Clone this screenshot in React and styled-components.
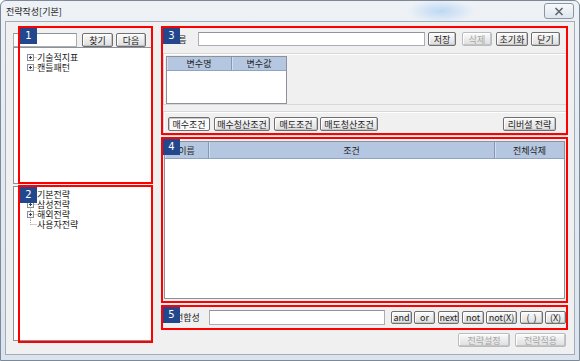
import React from 'react';
import styled, { createGlobalStyle } from 'styled-components';

const GlobalStyle = createGlobalStyle`
  html, body { margin: 0; padding: 0; }
  body {
    width: 580px;
    height: 361px;
    overflow: hidden;
    font-family: "Noto Sans CJK KR", "DejaVu Sans", sans-serif;
    font-size: 9px;
    color: #1b1b1b;
  }
`;

const Window = styled.div`
  width: 580px;
  height: 361px;
  box-sizing: border-box;
  display: flex;
  flex-direction: column;
  border: 1px solid #7d8996;
  border-radius: 6px 6px 0 0;
  padding: 0 4px 5px 4px;
  background:
    radial-gradient(ellipse 34px 12px at 440px 10px, rgba(150, 195, 240, 0.55), transparent),
    linear-gradient(180deg, #eef2f7 0%, #e3eaf2 40%, #dbe4ee 100%);
`;

const TitleBar = styled.div`
  height: 20px;
  display: flex;
  justify-content: space-between;
  align-items: flex-start;
`;

const Title = styled.span`
  margin: 5px 0 0 1px;
  line-height: 12px;
  color: #222;
`;

const CloseButton = styled.div`
  width: 30px;
  height: 16px;
  margin: 2px 1px 0 0;
  box-sizing: border-box;
  border: 1px solid #8c96a2;
  border-radius: 3px;
  background: linear-gradient(#f7f9fb, #dfe6ee);
  display: flex;
  align-items: center;
  justify-content: center;
`;

const Client = styled.div`
  flex: 1;
  box-sizing: border-box;
  background: #f0f0f0;
  border: 1px solid #a3adb8;
  display: flex;
  gap: 11px;
  padding: 4px 7px 0 7px;
`;

const LeftCol = styled.div`
  width: 139px;
  display: flex;
  flex-direction: column;
`;

const RightCol = styled.div`
  width: 404px;
  display: flex;
  flex-direction: column;
`;

const Section = styled.div`
  position: relative;
  height: ${p => p.$h}px;
  margin-top: ${p => p.$mt || 0}px;
  display: flex;
  flex-direction: column;
`;

const Frame = styled.div`
  position: absolute;
  top: ${p => p.$t}px;
  left: ${p => p.$l}px;
  right: ${p => p.$r}px;
  bottom: ${p => p.$b}px;
  border: 2px solid #ff0000;
  pointer-events: none;
`;

const Badge = styled.div`
  position: absolute;
  top: 0;
  left: 0;
  width: 17px;
  height: 16px;
  background: #22478d;
  color: #fff;
  font-family: "DejaVu Sans", sans-serif;
  font-size: 10px;
  line-height: 16px;
  text-align: center;
`;

const Row = styled.div`
  display: flex;
  align-items: center;
  gap: ${p => p.$gap || 0}px;
  padding: ${p => p.$pad || '0'};
`;

const Input = styled.div`
  box-sizing: border-box;
  width: ${p => p.$w}px;
  height: ${p => p.$h || 14}px;
  background: #fff;
  border: 1px solid #abadb3;
  border-top-color: #8f939b;
`;

const Button = styled.div`
  box-sizing: border-box;
  width: ${p => p.$w}px;
  height: ${p => p.$h || 14}px;
  margin-left: ${p => p.$ml || 0}px;
  flex-shrink: 0;
  display: flex;
  align-items: center;
  justify-content: center;
  white-space: nowrap;
  font-size: 9px;
  color: ${p => (p.$disabled ? '#a5a5a5' : '#1b1b1b')};
  border: 1px solid ${p => (p.$disabled ? '#b9bdc1' : '#6f6f6f')};
  border-radius: 2px;
  background: ${p =>
    p.$active ? '#fbfbfb' : 'linear-gradient(#fbfbfb, #ececec 50%, #dedede)'};
  box-shadow: ${p =>
    p.$active ? 'inset 1px 1px 0 #c9c9c9' : 'inset -1px -1px 0 #c4c4c4, inset 1px 1px 0 #ffffff'};
`;

const Tree = styled.div`
  box-sizing: border-box;
  height: ${p => p.$h}px;
  background: #fff;
  border: 1px solid #8d9199;
  padding: ${p => p.$pt}px 0 0 12px;
`;

const TreeRow = styled.div`
  display: flex;
  align-items: center;
  height: 10px;
  line-height: 10px;
  white-space: nowrap;
  span { margin-left: 0; }
`;

const Group = styled.div`
  box-sizing: border-box;
  height: ${p => p.$h}px;
  margin-top: ${p => p.$mt || 0}px;
  border: 1px solid #d8d8d8;
  border-right: none;
  box-shadow: inset 1px 1px 0 #fff;
  padding: ${p => p.$pad || '2px'};
  display: flex;
`;

const Grid = styled.div`
  box-sizing: border-box;
  width: ${p => p.$w}px;
  height: ${p => p.$h}px;
  margin: ${p => p.$m || 0};
  background: #fff;
  border: 1px solid #8d9199;
`;

const GridHead = styled.div`
  display: flex;
  height: ${p => p.$h}px;
  background: #b5c7e0;
  border-bottom: 1px solid #8fa3c3;
`;

const HeadCell = styled.div`
  width: ${p => p.$w}px;
  flex: ${p => (p.$w ? 'none' : '1')};
  box-sizing: border-box;
  display: flex;
  align-items: center;
  justify-content: center;
  color: #1d1d1d;
  border-right: ${p => (p.$last ? 'none' : '1px solid #8497b6')};
  box-shadow: inset 1px 0 0 #d3deed;
`;

const Label = styled.div`
  box-sizing: border-box;
  width: ${p => p.$w}px;
  padding-left: ${p => p.$pl}px;
  white-space: nowrap;
`;

const Footer = styled.div`
  display: flex;
  justify-content: flex-end;
  gap: 5px;
  margin: 2px 1px 0 0;
`;

const dot = { stroke: '#9d9d9d', strokeWidth: 1, strokeDasharray: '1 1' };

const TreeIcon = ({ kind, up, down }) => (
  <svg width="11" height="10" viewBox="0 0 11 10">
    {up && <line x1="4.5" y1="0" x2="4.5" y2={kind === 'leaf' ? 4.5 : 1.5} {...dot} />}
    {down && kind !== 'leaf' && <line x1="4.5" y1="7.5" x2="4.5" y2="10" {...dot} />}
    <line x1={kind === 'leaf' ? 4.5 : 7.5} y1="4.5" x2="11" y2="4.5" {...dot} />
    {kind !== 'leaf' && (
      <>
        <rect x="1.5" y="1.5" width="6" height="6" fill="#f6f6f6" stroke="#8e8f8f" />
        <line x1="3" y1="4.5" x2="6" y2="4.5" stroke="#2f3f60" />
        {kind === 'plus' && <line x1="4.5" y1="3" x2="4.5" y2="6" stroke="#2f3f60" />}
      </>
    )}
  </svg>
);

const Item = ({ kind, up, down, children }) => (
  <TreeRow>
    <TreeIcon kind={kind} up={up} down={down} />
    <span>{children}</span>
  </TreeRow>
);

const Annotation = ({ n, t, l, r, b }) => (
  <Frame $t={t} $l={l} $r={r} $b={b}>
    <Badge>{n}</Badge>
  </Frame>
);

export default function App() {
  return (
    <>
      <GlobalStyle />
      <Window>
        <TitleBar>
          <Title>전략작성[기본]</Title>
          <CloseButton>
            <svg width="10" height="9" viewBox="0 0 10 9">
              <path d="M1.5 1 L8.5 8 M8.5 1 L1.5 8" stroke="#5e6670" strokeWidth="1.6" />
            </svg>
          </CloseButton>
        </TitleBar>
        <Client>
          <LeftCol>
            <Section $h={158}>
              <Row $pad="7px 0 0 0" $gap={0}>
                <Input $w={64} />
                <Button $w={31} $ml={5}>찾기</Button>
                <Button $w={30} $ml={3}>다음</Button>
              </Row>
              <Tree $h={137} $pt={5}>
                <Item kind="plus">기술적지표</Item>
                <Item kind="plus">캔들패턴</Item>
              </Tree>
              <Annotation n="1" t={0} l={5} r={-1} b={0} />
            </Section>
            <Section $h={157} $mt={2}>
              <Tree $h={155} $pt={3}>
                <Item kind="minus" down>기본전략</Item>
                <Item kind="plus" up down>삼성전략</Item>
                <Item kind="plus" up down>해외전략</Item>
                <Item kind="leaf" up>사용자전략</Item>
              </Tree>
              <Annotation n="2" t={-1} l={5} r={-1} b={0} />
            </Section>
          </LeftCol>

          <RightCol>
            <Section $h={110}>
              <Row $pad="6px 0 0 0">
                <Label $w={35} $pl={7}>이름</Label>
                <Input $w={227} />
                <Button $w={28} $ml={3}>저장</Button>
                <Button $w={30} $ml={6} $disabled>삭제</Button>
                <Button $w={32} $ml={4}>초기화</Button>
                <Button $w={29} $ml={3}>닫기</Button>
              </Row>
              <Group $h={52} $mt={7}>
                <Grid $w={121} $h={48}>
                  <GridHead $h={13}>
                    <HeadCell $w={65}>변수명</HeadCell>
                    <HeadCell $last>변수값</HeadCell>
                  </GridHead>
                </Grid>
              </Group>
              <Group $h={26} $mt={6} $pad="5px 0 0 4px">
                <Row style={{ width: '100%', alignItems: 'flex-start' }}>
                  <Button $w={42} $active>매수조건</Button>
                  <Button $w={56} $ml={4}>매수청산조건</Button>
                  <Button $w={44} $ml={4}>매도조건</Button>
                  <Button $w={58} $ml={2}>매도청산조건</Button>
                  <Button $w={53} $ml={125}>리버셜 전략</Button>
                </Row>
              </Group>
              <Annotation n="3" t={0} l={-2} r={-1} b={1} />
            </Section>

            <Section $h={167} $mt={1}>
              <Grid $w={401} $h={158} $m="4px 0 0 1px">
                <GridHead $h={16}>
                  <HeadCell $w={44}>이름</HeadCell>
                  <HeadCell $w={286}>조건</HeadCell>
                  <HeadCell $last>전체삭제</HeadCell>
                </GridHead>
              </Grid>
              <Annotation n="4" t={0} l={-2} r={-1} b={1} />
            </Section>

            <Section $h={26} $mt={1}>
              <Row $pad="5px 0 0 0">
                <Label $w={46} $pl={12}>전합성</Label>
                <Input $w={176} $h={15} />
                <Button $w={21} $h={13} $ml={6}>and</Button>
                <Button $w={21} $h={13} $ml={2}>or</Button>
                <Button $w={21} $h={13} $ml={3}>next</Button>
                <Button $w={22} $h={13} $ml={3}>not</Button>
                <Button $w={31} $h={13} $ml={2}>not(X)</Button>
                <Button $w={23} $h={13} $ml={3}>(&nbsp;&nbsp;)</Button>
                <Button $w={21} $h={13} $ml={2}>(X)</Button>
              </Row>
              <Annotation n="5" t={0} l={-2} r={-1} b={1} />
            </Section>

            <Footer>
              <Button $w={52} $disabled>전략설정</Button>
              <Button $w={51} $disabled>전략적용</Button>
            </Footer>
          </RightCol>
        </Client>
      </Window>
    </>
  );
}
